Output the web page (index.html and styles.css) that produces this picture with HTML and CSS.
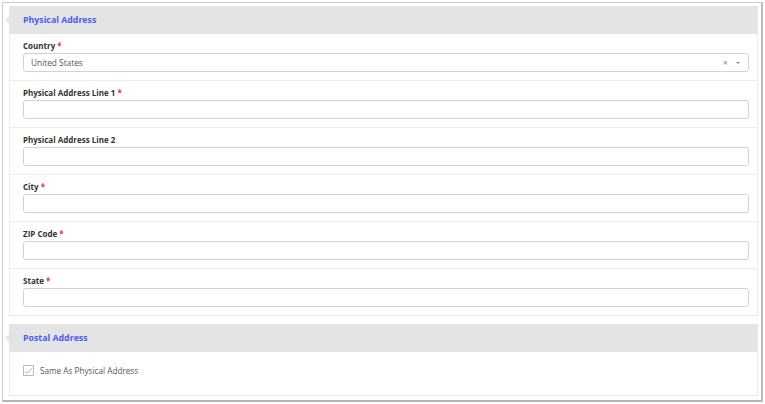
FILE: index.html
```html
<!DOCTYPE html>
<html lang="en">
<head>
    <meta charset="UTF-8">
    <title>Address</title>
    <link rel="stylesheet" href="styles.css">
</head>
<body>
    <div class="frame">
        <div class="section">
            <div class="section-head">Physical Address</div>
            <div class="section-body">
                <div class="row">
                    <label class="label">Country <span class="req">*</span></label>
                    <div class="select">
                        <span class="select-value">United States</span>
                        <span class="select-clear">×</span>
                        <span class="select-caret"></span>
                    </div>
                </div>
                <div class="row">
                    <label class="label">Physical Address Line 1 <span class="req">*</span></label>
                    <input class="input" type="text">
                </div>
                <div class="row">
                    <label class="label">Physical Address Line 2</label>
                    <input class="input" type="text">
                </div>
                <div class="row">
                    <label class="label">City <span class="req">*</span></label>
                    <input class="input" type="text">
                </div>
                <div class="row">
                    <label class="label">ZIP Code <span class="req">*</span></label>
                    <input class="input" type="text">
                </div>
                <div class="row">
                    <label class="label">State <span class="req">*</span></label>
                    <input class="input" type="text">
                </div>
            </div>
        </div>
        <div class="section">
            <div class="section-head">Postal Address</div>
            <div class="section-body">
                <div class="check-row">
                    <span class="checkbox">
                        <svg width="9" height="8" viewBox="0 0 9 8"><path d="M1 4.2 L3.4 6.4 L8 1.2" fill="none" stroke="#b5b5b5" stroke-width="1"/></svg>
                    </span>
                    <span class="check-label">Same As Physical Address</span>
                </div>
            </div>
        </div>
    </div>
</body>
</html>
```

FILE: styles.css
```css
body {
    margin: 0;
    font-family: 'Open Sans', sans-serif;
    background: #fff;
    color: #333;
}
.frame {
    margin: 2px;
    height: 400px;
    box-sizing: border-box;
    border: 1px solid #c6ccd4;
    border-right: 2px solid #b9bfc7;
    border-bottom: 2px solid #b1b6bd;
    padding: 3px 3px 0 6px;
}
.section {
    margin-bottom: 8px;
}
.section-head {
    position: relative;
    background: #e4e4e4;
    height: 28px;
    line-height: 28px;
    padding-left: 14px;
    font-size: 8.8px;
    font-weight: 700;
    color: #4a5af8;
}
.section-head::before {
    content: "";
    position: absolute;
    left: -4px;
    top: 10px;
    border-top: 4px solid transparent;
    border-bottom: 4px solid transparent;
    border-right: 4px solid #e8e8e8;
}
.section-body {
    border: 1px solid #ececec;
    border-top: none;
}
.row {
    padding: 6px 8px 8px 13px;
    border-bottom: 1px solid #ececec;
}
.row:last-child {
    border-bottom: none;
}
.label {
    display: block;
    height: 13px;
    line-height: 12px;
    font-size: 8px;
    font-weight: 700;
    color: #333;
}
.req {
    color: #e53935;
}
.input,
.select {
    display: block;
    width: 100%;
    height: 19px;
    box-sizing: border-box;
    border: 1px solid #cfd2dc;
    border-radius: 3px;
    background: #fff;
    margin: 0;
    outline: none;
}
.select {
    display: flex;
    align-items: center;
    padding: 0 8px 0 7px;
    font-size: 8.3px;
    color: #555;
}
.select-value {
    flex: 1;
}
.select-clear {
    color: #888;
    font-size: 9px;
    margin-right: 8px;
}
.select-caret {
    width: 0;
    height: 0;
    border-left: 2.5px solid transparent;
    border-right: 2.5px solid transparent;
    border-top: 2.5px solid #888;
}
.check-row {
    display: flex;
    align-items: flex-start;
    height: 43px;
    box-sizing: border-box;
    padding: 13px 0 0 13px;
}
.checkbox {
    display: flex;
    align-items: center;
    justify-content: center;
    width: 11px;
    height: 11px;
    box-sizing: border-box;
    border: 1px solid #b8b8b8;
    border-radius: 1px;
    margin-right: 6px;
}
.check-label {
    font-size: 8.2px;
    line-height: 11px;
    color: #555;
}
```
